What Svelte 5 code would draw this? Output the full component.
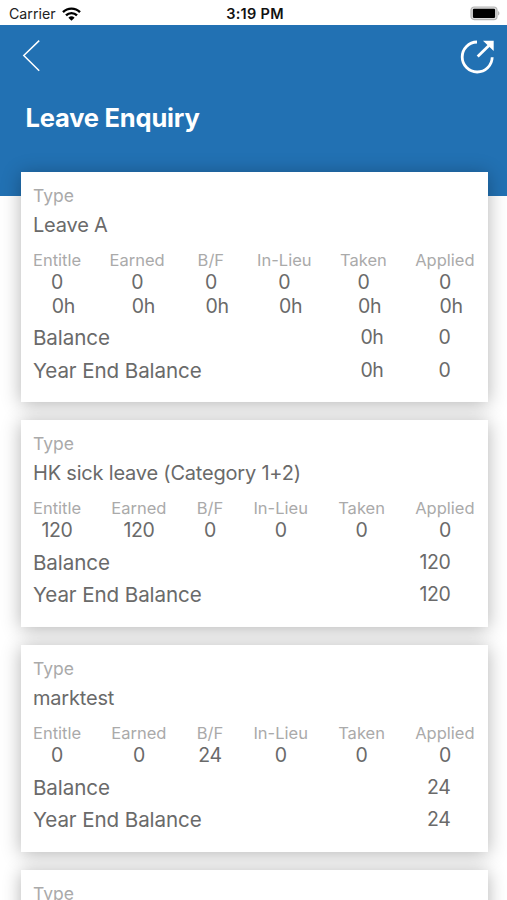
<script lang="ts">
	type Leave = {
		name?: string;
		days?: number[];
		hours?: number[];
		balance?: string[];
		yearEnd?: string[];
	};

	const columns = ['Entitle', 'Earned', 'B/F', 'In-Lieu', 'Taken', 'Applied'];

	const leaves: Leave[] = [
		{
			name: 'Leave A',
			days: [0, 0, 0, 0, 0, 0],
			hours: [0, 0, 0, 0, 0, 0],
			balance: ['0h', '0'],
			yearEnd: ['0h', '0']
		},
		{
			name: 'HK sick leave (Category 1+2)',
			days: [120, 120, 0, 0, 0, 0],
			balance: ['120'],
			yearEnd: ['120']
		},
		{
			name: 'marktest',
			days: [0, 0, 24, 0, 0, 0],
			balance: ['24'],
			yearEnd: ['24']
		},
		{}
	];
</script>

{#snippet total(label: string, amounts: string[] = [])}
	<div class="total">
		<span>{label}</span>
		<div class="amounts">
			{#each amounts as amount}
				<span>{amount}</span>
			{/each}
		</div>
	</div>
{/snippet}

<div class="screen">
	<div class="status-bar">
		<div class="carrier">
			<span>Carrier</span>
			<svg width="19" height="14" viewBox="0 0 19 14">
				<path d="M1 5.2a12 12 0 0 1 17 0" />
				<path d="M4 8.4a7.8 7.8 0 0 1 11 0" />
				<path class="dot" d="M9.5 13.8 6.4 10.8a4.5 4.5 0 0 1 6.2 0Z" />
			</svg>
		</div>
		<span class="time">3:19 PM</span>
		<svg class="battery" width="31" height="15" viewBox="0 0 31 15">
			<rect class="shell" x="1" y="1" width="26" height="12.6" rx="3.2" />
			<rect class="charge" x="2.9" y="2.8" width="22.2" height="9.2" rx="1.2" />
			<path class="cap" d="M28.2 5c1.6.8 1.6 3.8 0 4.6Z" />
		</svg>
	</div>

	<header>
		<div class="toolbar">
			<button aria-label="Back">
				<svg width="20" height="34" viewBox="0 0 20 34">
					<path d="M18.2 2.6 2.8 17.5l15.4 15.2" />
				</svg>
			</button>
			<button aria-label="Open">
				<svg class="open" width="36" height="36" viewBox="0 0 36 36">
					<path d="M17 4A15 15 0 1 0 32.2 19.3" />
					<path d="M17.7 18.5 29 7.5" />
					<path class="head" d="M23 2.7H33.7V13Z" />
				</svg>
			</button>
		</div>
		<h1>Leave Enquiry</h1>
	</header>

	<main>
		{#each leaves as leave}
			<section class="card">
				<div class="type">Type</div>
				{#if leave.days}
					<div class="name">{leave.name}</div>

					<div class="columns">
						{#each columns as column, i}
							<div class="column" class:hourly={leave.hours}>
								<span class="label">{column}</span>
								<span class="value">{leave.days[i]}</span>
								{#if leave.hours}
									<span class="value hours">{leave.hours[i]}h</span>
								{/if}
							</div>
						{/each}
					</div>

					{@render total('Balance', leave.balance)}
					{@render total('Year End Balance', leave.yearEnd)}
				{/if}
			</section>
		{/each}
	</main>
</div>

<style>
	:global(body) {
		margin: 0;
		overflow: hidden;
	}

	.screen {
		height: 900px;
		overflow: hidden;
		background: #fff;
		color: #6a6a6a;
		font-family: Inter, 'Liberation Sans', sans-serif;
	}

	.status-bar {
		display: grid;
		grid-template-columns: 1fr auto 1fr;
		align-items: center;
		box-sizing: border-box;
		height: 25px;
		padding: 2px 6px 0 9px;
		color: #222;
		font-size: 14.2px;
	}

	.carrier {
		display: flex;
		align-items: center;
		gap: 6px;
	}

	.carrier path {
		fill: none;
		stroke: #000;
		stroke-width: 2.4;
	}

	.carrier .dot {
		fill: #000;
		stroke: none;
	}

	.time {
		color: #111;
		font-size: 14.5px;
		font-weight: 600;
		letter-spacing: 0.3px;
	}

	.battery {
		justify-self: end;
	}

	.shell {
		fill: #ddd;
		stroke: #b5b5b5;
		stroke-width: 1.2;
	}

	.charge {
		fill: #000;
	}

	.cap {
		fill: #aaa;
	}

	header {
		box-sizing: border-box;
		height: 171px;
		padding: 13px 11.5px 0 20.5px;
		background: #2271b3;
		color: #fff;
	}

	.toolbar {
		display: flex;
		justify-content: space-between;
		height: 36px;
	}

	button {
		display: flex;
		padding: 0;
		border: 0;
		background: none;
	}

	button path {
		fill: none;
		stroke: #fff;
		stroke-width: 1.5;
	}

	.open path {
		stroke-width: 2.8;
	}

	.open .head {
		fill: #fff;
		stroke: none;
	}

	h1 {
		margin: 28px 0 0 5px;
		font-size: 25.5px;
		font-weight: 700;
		letter-spacing: -0.2px;
		line-height: 32px;
	}

	main {
		display: flex;
		flex-direction: column;
		gap: 18.3px;
		margin-top: -24px;
		padding: 0 19.5px 0 20.5px;
	}

	.card {
		padding: 12px 13px 15px 12.5px;
		background: #fff;
		box-shadow: 0 2px 18px rgba(0, 0, 0, 0.3);
	}

	.type {
		color: #aaa;
		font-size: 17.5px;
		line-height: 24px;
	}

	.name {
		height: 34px;
		font-size: 20px;
		letter-spacing: -0.2px;
		line-height: 35px;
	}

	.columns {
		display: flex;
		justify-content: space-between;
		margin-top: 7px;
	}

	.column {
		display: flex;
		flex-direction: column;
		align-items: center;
	}

	.column.hourly {
		min-width: 34px;
	}

	.label {
		height: 22px;
		color: #aaa;
		font-size: 16.5px;
		line-height: 22px;
	}

	.value {
		height: 23.5px;
		font-size: 19.5px;
		letter-spacing: -0.4px;
		line-height: 23px;
	}

	.hours {
		padding-left: 12.5px;
	}

	.total {
		display: flex;
		justify-content: space-between;
		height: 32.5px;
		font-size: 20.6px;
		letter-spacing: -0.1px;
		line-height: 32.5px;
	}

	.columns + .total {
		margin-top: 4px;
	}

	.amounts {
		display: flex;
		padding-right: 24px;
		font-size: 19.5px;
		letter-spacing: -0.4px;
		line-height: 31px;
	}

	.amounts span + span {
		width: 67px;
		text-align: right;
	}
</style>
